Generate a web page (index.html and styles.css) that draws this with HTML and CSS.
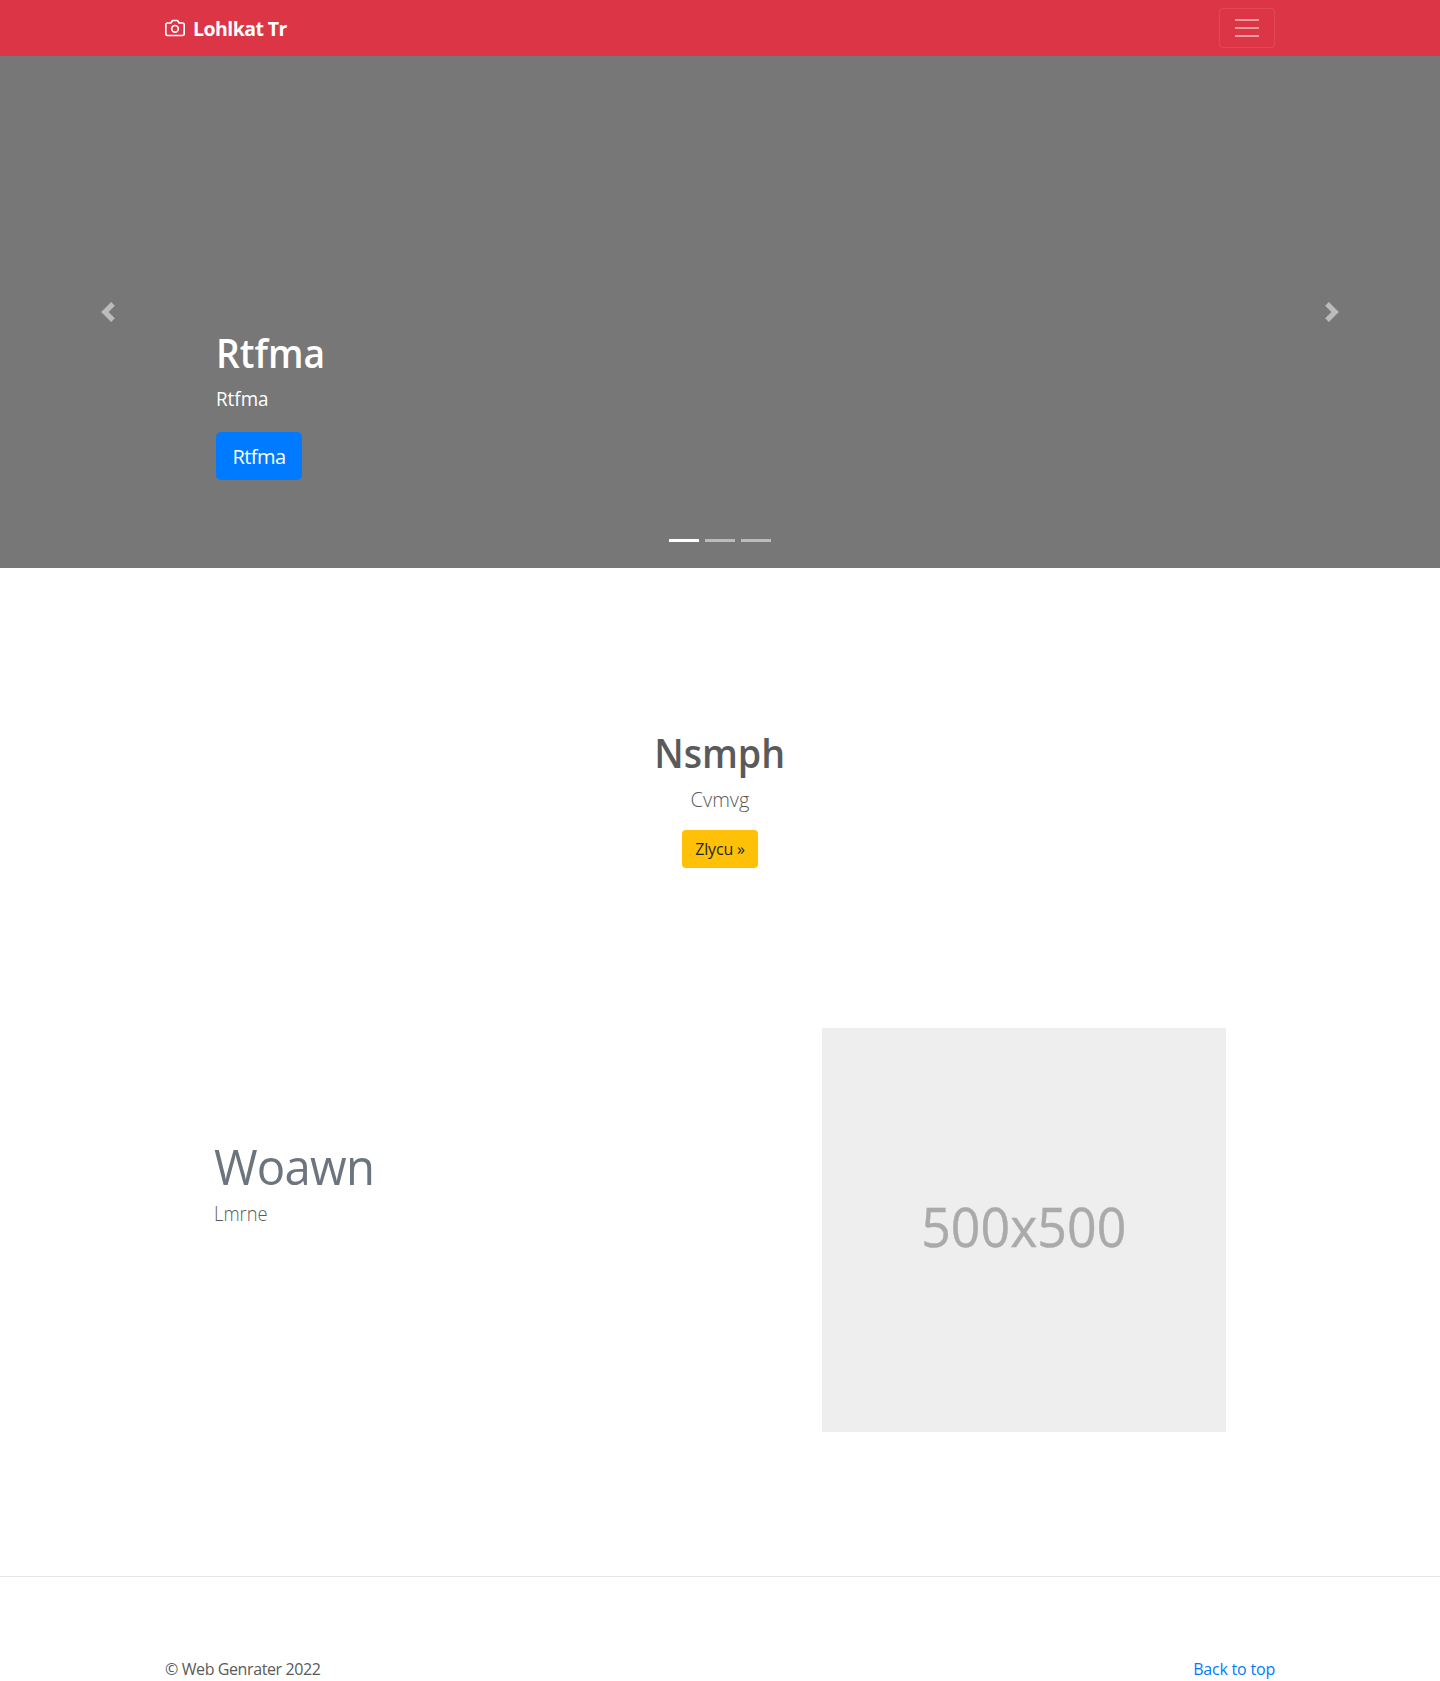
FILE: index.html
```html
<!DOCTYPE html>
<html lang="en">
<head>
<meta charset="utf-8">
<title>Lohlkat Tr</title>
<link rel="stylesheet" href="styles.css">
</head>
<body>
<header class="navbar">
  <div class="container navbar-row">
    <a class="brand" href="#">
      <svg class="brand-icon" width="20" height="20" viewBox="0 0 24 24" fill="none" stroke="currentColor" stroke-width="2" stroke-linecap="round" stroke-linejoin="round"><path d="M23 19a2 2 0 0 1-2 2H3a2 2 0 0 1-2-2V8a2 2 0 0 1 2-2h4l2-3h6l2 3h4a2 2 0 0 1 2 2z"/><circle cx="12" cy="13" r="4"/></svg>
      <strong class="brand-name">Lohlkat Tr</strong>
    </a>
    <button class="toggler" type="button" aria-label="Toggle navigation"><span class="toggler-bar"></span><span class="toggler-bar"></span><span class="toggler-bar"></span></button>
  </div>
</header>
<main>
  <section class="carousel">
    <a class="carousel-control" href="#" aria-label="Previous"><svg width="20" height="20" viewBox="0 0 8 8" fill="#fff"><path d="M5.25 0l-4 4 4 4 1.5-1.5L4.25 4l2.5-2.5L5.25 0z"/></svg></a>
    <div class="carousel-body">
      <div class="carousel-caption">
        <h1 class="caption-title">Rtfma</h1>
        <p class="caption-text">Rtfma</p>
        <a class="btn btn-primary" href="#">Rtfma</a>
      </div>
      <div class="indicators"><span class="indicator active"></span><span class="indicator"></span><span class="indicator"></span></div>
    </div>
    <a class="carousel-control" href="#" aria-label="Next"><svg width="20" height="20" viewBox="0 0 8 8" fill="#fff"><path d="M2.75 0l-1.5 1.5L3.75 4l-2.5 2.5L2.75 8l4-4-4-4z"/></svg></a>
  </section>
  <section class="marketing">
    <h2 class="marketing-title">Nsmph</h2>
    <p class="marketing-text">Cvmvg</p>
    <a class="btn btn-warning" href="#">Zlycu »</a>
  </section>
  <section class="featurette">
    <div class="featurette-copy">
      <h2 class="featurette-title">Woawn</h2>
      <p class="featurette-text">Lmrne</p>
    </div>
    <div class="placeholder"><span class="placeholder-label">500x500</span></div>
  </section>
</main>
<footer class="footer">
  <div class="container footer-row">
    <span class="copyright">© Web Genrater 2022</span>
    <a class="back-link" href="#">Back to top</a>
  </div>
</footer>
</body>
</html>
```
FILE: styles.css
```css
* { box-sizing: border-box; }
body {
  margin: 0;
  background: #fff;
  color: #5a5a5a;
  font: 400 16px/1.5 "Open Sans", "Noto Sans", sans-serif;
  font-variant-ligatures: none;
}
h1, h2, p { margin: 0; }
a { color: inherit; text-decoration: none; }
.container { width: 1110px; margin: 0 auto; }

.navbar { height: 56px; background: #dc3545; color: #fff; }
.navbar-row { height: 100%; display: flex; align-items: center; justify-content: space-between; }
.brand { display: flex; align-items: center; gap: 8px; }
.brand-icon { display: block; }
.brand-name { padding-top: 2px; font-size: 19.5px; line-height: 30px; font-weight: 700; letter-spacing: -0.55px; }
.toggler {
  width: 56px; height: 40px; padding: 0;
  display: flex; flex-direction: column; align-items: center; justify-content: center; gap: 6px;
  border: 1px solid rgba(255, 255, 255, .1); border-radius: 4px; background: none;
}
.toggler-bar { width: 24px; height: 2px; background: rgba(255, 255, 255, .5); }

.carousel { height: 512px; background: #777; display: flex; color: #fff; }
.carousel-control { width: 216px; display: flex; align-items: center; justify-content: center; opacity: .5; }
.carousel-body { flex: 1; display: flex; flex-direction: column; justify-content: space-between; padding: 273px 0 26px; }
.caption-title { font-size: 40px; line-height: 48px; font-weight: 600; margin-bottom: 8px; transform: scaleX(.93); transform-origin: left; }
.caption-text { font-size: 20px; line-height: 28px; margin-bottom: 19px; transform: scaleX(.94); transform-origin: left; }
.btn { display: block; border-radius: 4px; text-align: center; }
.btn-primary {
  width: 86px; height: 48px; border-radius: 5px; background: #007bff;
  font-size: 20px; line-height: 49px; letter-spacing: -0.6px;
}
.indicators { display: flex; justify-content: center; gap: 6px; }
.indicator { width: 30px; height: 3px; background: #fff; opacity: .5; }
.indicator.active { opacity: 1; }

.marketing { padding: 161px 0 160px; display: flex; flex-direction: column; align-items: center; }
.marketing-title { font-size: 40px; line-height: 48px; font-weight: 600; margin-bottom: 8px; transform: scaleX(.94); }
.marketing-text { font-size: 20px; line-height: 30px; font-weight: 300; margin-bottom: 15px; }
.btn-warning { width: 76px; height: 38px; background: #ffc107; color: #212529; line-height: 38px; letter-spacing: -0.2px; }

.featurette { width: 1012px; margin: 0 auto; height: 404px; display: flex; justify-content: space-between; }
.featurette-copy { padding-top: 113px; }
.featurette-title { font-size: 50px; line-height: 50px; font-weight: 400; color: #6c757d; margin-bottom: 8px; letter-spacing: -.8px; transform: scaleX(.945); transform-origin: left; }
.featurette-text { font-size: 20px; line-height: 30px; font-weight: 300; transform: scaleX(.915); transform-origin: left; }
.placeholder { width: 404px; height: 404px; padding-bottom: 9px; background: #eee; color: #aaa; display: flex; align-items: center; justify-content: center; }
.placeholder-label { font-size: 55.5px; line-height: 1; transform: scaleX(.935); -webkit-text-stroke: .4px #aaa; }

.footer { margin-top: 144px; border-top: 1px solid #e5e5e5; }
.footer-row { padding-top: 80px; display: flex; justify-content: space-between; }
.copyright { letter-spacing: -0.4px; }
.back-link { color: #007bff; letter-spacing: -0.2px; }
```
